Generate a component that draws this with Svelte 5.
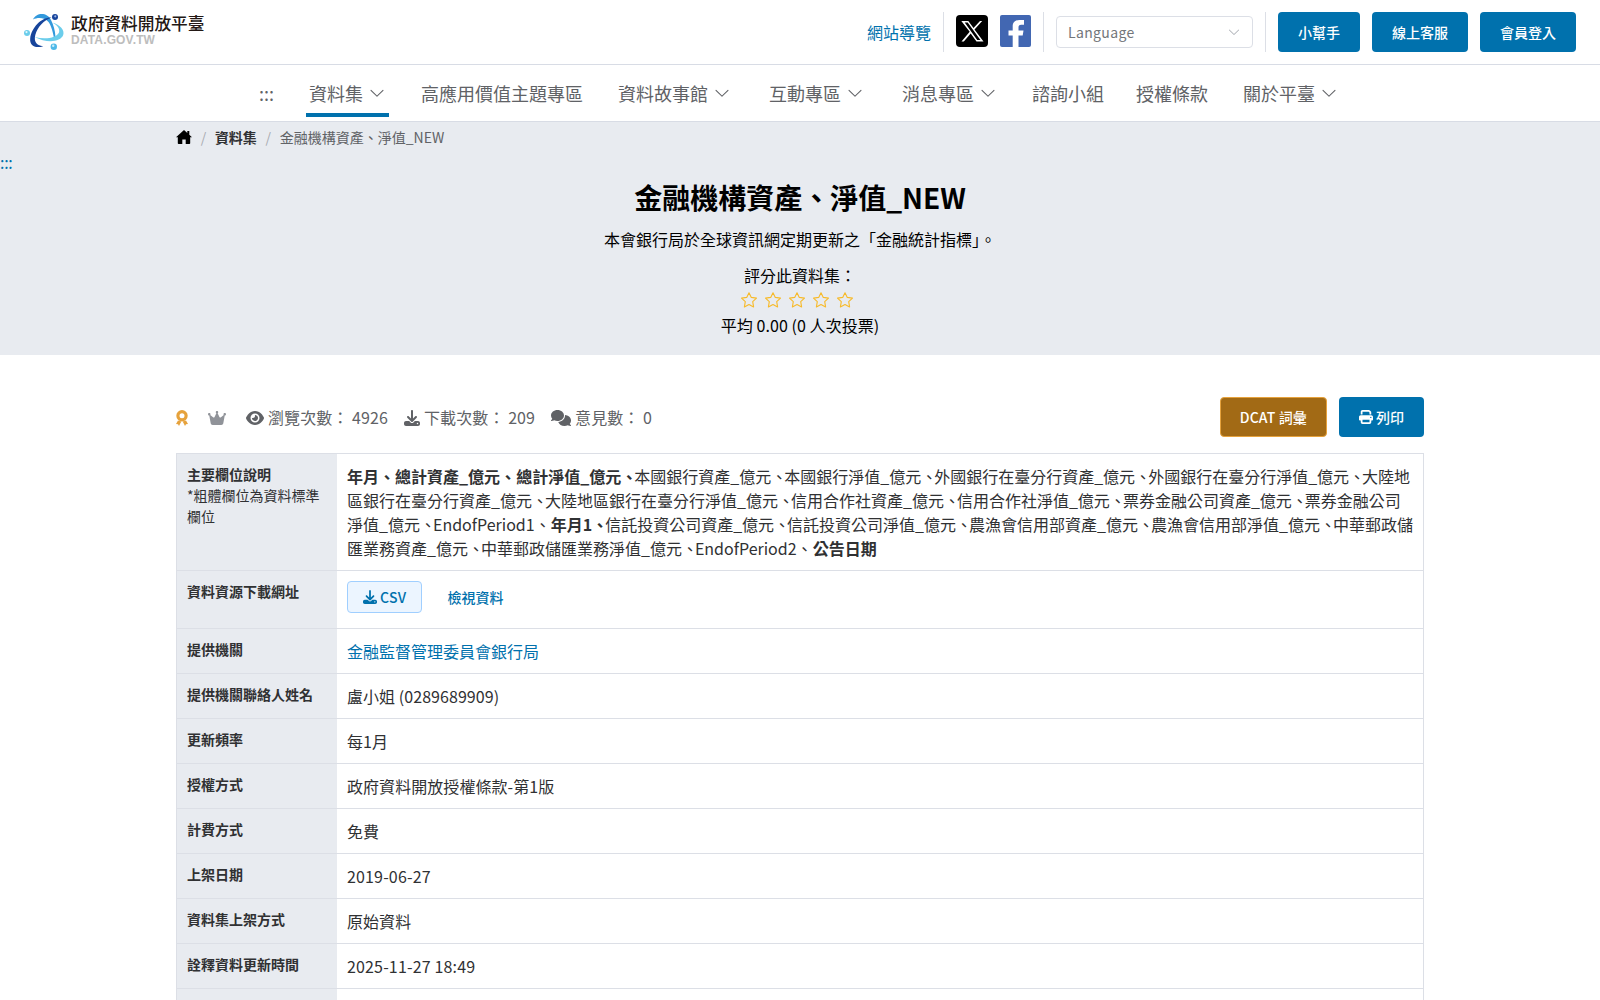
<script>
  const fields = [
    ['年月', 1], ['總計資產_億元', 1], ['總計淨值_億元', 1, 1], ['本國銀行資產_億元', 0, 1], ['本國銀行淨值_億元', 0, 1],
    ['外國銀行在臺分行資產_億元', 0, 1], ['外國銀行在臺分行淨值_億元', 0, 1], ['大陸地區銀行在臺分行資產_億元', 0, 1],
    ['大陸地區銀行在臺分行淨值_億元', 0, 1], ['信用合作社資產_億元', 0, 1], ['信用合作社淨值_億元', 0, 1],
    ['票券金融公司資產_億元', 0, 1], ['票券金融公司淨值_億元', 0, 1], ['EndofPeriod1', 0], ['年月1', 1, 1],
    ['信託投資公司資產_億元', 0, 1], ['信託投資公司淨值_億元', 0, 1], ['農漁會信用部資產_億元', 0, 1],
    ['農漁會信用部淨值_億元', 0, 1], ['中華郵政儲匯業務資產_億元', 0, 1], ['中華郵政儲匯業務淨值_億元', 0, 1],
    ['EndofPeriod2', 0], ['公告日期', 1]
  ];
  const nav = [
    { t: '資料集', d: true, on: true, w: 112 }, { t: '高應用價值主題專區', w: 197 }, { t: '資料故事館', d: true, w: 151 },
    { t: '互動專區', d: true, w: 133 }, { t: '消息專區', d: true, w: 130 }, { t: '諮詢小組', w: 104 },
    { t: '授權條款', w: 107 }, { t: '關於平臺', d: true, w: 133 }
  ];
  const rows = [
    ['提供機關聯絡人姓名', '盧小姐 (0289689909)'], ['更新頻率', '每1月'], ['授權方式', '政府資料開放授權條款-第1版'],
    ['計費方式', '免費'], ['上架日期', '2019-06-27', 1], ['資料集上架方式', '原始資料'],
    ['詮釋資料更新時間', '2025-11-27 18:49', 1], ['', '']
  ];
</script>

{#snippet chevron(size)}
  <svg class="chev" width={size} height={size} viewBox="0 0 1024 1024" fill="currentColor"><path d="M831.872 340.864 512 652.672 192.128 340.864a30.592 30.592 0 0 0-42.752 0 29.12 29.12 0 0 0 0 41.6L489.664 714.24a32 32 0 0 0 44.672 0l340.288-331.712a29.12 29.12 0 0 0 0-41.728 30.592 30.592 0 0 0-42.752 0z" /></svg>
{/snippet}
{#snippet download(size)}
  <svg width={size} height={size} viewBox="0 0 512 512" fill="currentColor"><path d="M288 32c0-17.7-14.3-32-32-32s-32 14.3-32 32V274.700l-73.400-73.400c-12.500-12.500-32.800-12.500-45.300 0s-12.500 32.800 0 45.300l128 128c12.500 12.500 32.800 12.500 45.300 0l128-128c12.500-12.500 12.500-32.800 0-45.300s-32.800-12.500-45.300 0L288 274.700V32zM64 352c-35.300 0-64 28.700-64 64v32c0 35.300 28.700 64 64 64H448c35.300 0 64-28.700 64-64V416c0-35.300-28.700-64-64-64H346.500l-45.300 45.300c-25 25-65.500 25-90.500 0L165.500 352H64zm368 56a24 24 0 1 1 0 48 24 24 0 1 1 0-48z" /></svg>
{/snippet}

<div class="page">
  <header class="top">
    <a class="brand" href="#top" aria-label="DATA.GOV.TW">
      <svg width="42" height="40" viewBox="0 0 42 40">
        <path d="M9 7.500C12 .5 23-.5 27 8c2.500 5 4 10 4.500 17l-1.600.5C28.500 18 26.500 12 24 9.500 20 5 13 5.500 9 7.500z" fill="#3299dc" />
        <path d="M27.500 5.500C20 8 13.500 15 11.300 23c-1.500 6 .5 10.500 8 11.200C10.500 37 5.500 33 6.200 26.500 7.500 15.500 17.500 5 27.500 5.500z" fill="#17449b" />
        <path d="M28.500 10.500c7.500 2.500 12.500 7.500 10.700 12.500-2.500 7-16.200 8.500-28.700 2 11 2.700 22 1 24.500-4.500 1.200-3.500-1.500-7-6.500-10z" fill="#6bcdeb" />
        <circle cx="31" cy="4.900" r="3" fill="#17449b" /><circle cx="31.300" cy="4.300" r="1.100" fill="#9eb6e5" />
        <circle cx="3" cy="20.900" r="3" fill="#6bcdeb" /><circle cx="2.500" cy="20.100" r="1.100" fill="#e4f8fd" />
        <circle cx="29.800" cy="34.700" r="3.200" fill="#4eb8e8" /><circle cx="29.200" cy="33.800" r="1.200" fill="#c9edfa" />
      </svg>
      <span class="names"><b>政府資料開放平臺</b><small>DATA.GOV.TW</small></span>
    </a>
    <div class="tools">
      <a class="map" href="#map">網站導覽</a>
      <i class="sep"></i>
      <svg class="social" width="32" height="32" viewBox="0 0 32 32"><rect width="32" height="32" rx="4" /><path d="M5.300 6h7l5.200 7.100L24 6h2.200l-7.700 8.500L27.500 26.500h-7l-5.800-8L7.800 26.500H5.500l8.200-9.700zM8.700 7.600 21.200 24.900h3.200L11.700 7.600z" fill="#fff" /></svg>
      <svg class="social" width="31" height="32" viewBox="0 0 31 32"><rect width="31" height="32" rx="2" fill="#4267b2" /><path d="M12.700 32V20.500H8.500V15.500h4.200V11.500c0-4.500 2.800-6.500 6.800-6.500H24v4.800h-2.800c-2 0-2.700.8-2.700 2.600v3.100h5l-.8 5h-4.200V32z" fill="#fff" /></svg>
      <i class="sep"></i>
      <div class="select"><span>Language</span>{@render chevron(14)}</div>
      <i class="sep"></i>
      <button>小幫手</button><button>線上客服</button><button>會員登入</button>
    </div>
  </header>

  <nav>
    <span class="dots">:::</span>
    <ul>
      {#each nav as n}
        <li style:width="{n.w}px"><a class:on={n.on} href="#nav">{n.t}{#if n.d}{@render chevron(18)}{/if}</a></li>
      {/each}
    </ul>
  </nav>

  <section class="hero">
    <div class="crumbs">
      <svg width="16" height="16" viewBox="0 0 16 16"><path d="M8 1 0 8.300h1.800V14.200q0 .8.800.8H6.300V10.500h3.400V15h3.700q.8 0 .8-.8V8.300H16L13.300 5.800V2h-2v2z" /></svg>
      <i>/</i><b>資料集</b><i>/</i><span>金融機構資產、淨值_NEW</span>
    </div>
    <div class="anchor">:::</div>
    <h1>金融機構資產、淨值_NEW</h1>
    <p>本會銀行局於全球資訊網定期更新之「金融統計指標」。</p>
    <div class="rate">評分此資料集：</div>
    <div class="stars">
      {#each Array(5) as _}
        <svg width="18" height="18" viewBox="0 0 18 18" fill="none" stroke="#f7ba2a" stroke-width="1.100" stroke-linejoin="round"><path d="m9 1.700 2.300 4.700 5.200.7-3.800 3.600.9 5.200L9 13.600l-4.600 2.300.9-5.200L1.500 7.100l5.200-.7z" /></svg>
      {/each}
    </div>
    <div class="avg">平均 0.00 (0 人次投票)</div>
  </section>

  <main>
    <div class="meta">
      <svg class="medal" width="12" height="16" viewBox="0 0 12 16"><circle cx="6" cy="5.700" r="4.100" fill="none" stroke="#e6a23c" stroke-width="3.200" /><path d="M2 10.500 0 14l2 .2L3 16l2.300-4.500zM10 10.500l2 3.500-2 .2L9 16l-2.300-4.500z" fill="#e6a23c" /></svg>
      <svg class="crown" width="18" height="16" viewBox="0 0 576 512" fill="#909399"><path d="M309 106c11.400-7 19-19.700 19-34 0-22.100-17.900-40-40-40s-40 17.900-40 40c0 14.400 7.600 27 19 34L209.700 220.600c-9.100 18.200-32.700 23.400-48.600 10.700L72 160c5-6.700 8-15 8-24 0-22.100-17.900-40-40-40S0 113.900 0 136s17.900 40 40 40c.2 0 .5 0 .7 0L86.400 427.400c5.500 30.400 32 52.600 63 52.600H426.600c30.900 0 57.400-22.100 63-52.600L535.300 176c.2 0 .5 0 .7 0 22.100 0 40-17.900 40-40s-17.900-40-40-40-40 17.900-40 40c0 9 3 17.300 8 24l-89.100 71.300c-15.900 12.700-39.500 7.500-48.600-10.700L309 106z" /></svg>
      <span class="stat"><svg width="18" height="16" viewBox="0 0 576 512" fill="currentColor"><path d="M288 32c-80.800 0-145.500 36.800-192.600 80.600C48.600 156 17.300 208 2.500 243.700c-3.300 7.900-3.300 16.700 0 24.600C17.300 304 48.600 356 95.400 399.400 142.500 443.200 207.200 480 288 480s145.500-36.800 192.600-80.600c46.800-43.500 78.100-95.400 93-131.100 3.300-7.900 3.300-16.700 0-24.600-14.900-35.700-46.200-87.700-93-131.100C433.500 68.800 368.800 32 288 32zM144 256a144 144 0 1 1 288 0 144 144 0 1 1-288 0zm144-64c0 35.300-28.700 64-64 64-7.100 0-13.900-1.200-20.300-3.300-5.500-1.800-11.900 1.600-11.700 7.400.3 6.900 1.300 13.800 3.200 20.700 13.700 51.200 66.400 81.600 117.600 67.900s81.600-66.400 67.900-117.600c-11.100-41.500-47.800-69.400-88.600-71.100-5.800-.2-9.200 6.100-7.400 11.700 2.100 6.400 3.300 13.200 3.300 20.300z" /></svg>瀏覽次數： 4926</span>
      <span class="stat">{@render download(16)}下載次數： 209</span>
      <span class="stat"><svg width="20" height="16" viewBox="0 0 640 512" fill="currentColor"><path d="M208 352c114.900 0 208-78.800 208-176S322.900 0 208 0 0 78.800 0 176c0 38.600 14.700 74.300 39.600 103.400-3.500 9.400-8.700 17.700-14.200 24.700-4.800 6.200-9.700 11-13.300 14.300-1.800 1.600-3.300 2.900-4.300 3.700C.9 327.300-1.400 336.400.8 343.400S9.200 352 16 352c21.800 0 43.800-5.600 62.100-12.500 9.200-3.500 17.800-7.400 25.300-11.400C134.100 343.300 169.800 352 208 352zM448 176c0 112.300-99.100 196.900-216.500 207C255.800 457.400 336.400 512 432 512c38.200 0 73.900-8.700 104.700-23.900 7.500 4 16 7.900 25.200 11.400 18.300 6.900 40.300 12.500 62.100 12.500 6.800 0 12.900-4.500 15-11.100 2.100-6.600-.2-13.800-5.800-17.900-1-.8-2.500-2-4.200-3.700-3.600-3.300-8.500-8.100-13.300-14.300-5.500-7-10.700-15.400-14.200-24.700 24.900-29 39.600-64.700 39.600-103.400 0-92.800-84.900-168.900-192.600-175.500.4 5.100.6 10.300.6 15.500z" /></svg>意見數： 0</span>
      <div class="acts">
        <button class="dcat">DCAT 詞彙</button>
        <button class="print"><svg width="14" height="14" viewBox="0 0 512 512" fill="currentColor"><path d="M128 0C92.700 0 64 28.700 64 64v96h64V64h226.700L384 93.300V160h64V93.300c0-17-6.700-33.300-18.700-45.300L400 18.700C388 6.700 371.700 0 354.700 0H128zM384 352v96H128V352H384zm64 32h32c17.700 0 32-14.300 32-32V256c0-35.300-28.700-64-64-64H64c-35.300 0-64 28.700-64 64v96c0 17.700 14.300 32 32 32h32v64c0 35.300 28.700 64 64 64h256c35.300 0 64-28.700 64-64v-64zM432 248a24 24 0 1 1 0 48 24 24 0 1 1 0-48z" /></svg>列印</button>
      </div>
    </div>

    <div class="table">
      <div class="row first">
        <div class="th"><b>主要欄位說明</b><br />*粗體欄位為資料標準欄位</div>
        <div class="td">{#each fields as f, i}<span class:strong={f[1]}>{f[0]}</span>{#if i < fields.length - 1}<span class:strong={f[1]} class:tight={f[2]}>、</span>{/if}{/each}</div>
      </div>
      <div class="row res">
        <div class="th"><b>資料資源下載網址</b></div>
        <div class="td"><button class="csv">{@render download(14)}CSV</button><a class="view" href="#view">檢視資料</a></div>
      </div>
      <div class="row"><div class="th"><b>提供機關</b></div><div class="td"><a href="#org">金融監督管理委員會銀行局</a></div></div>
      {#each rows as r}
        <div class="row"><div class="th"><b>{r[0]}</b></div><div class="td value" class:date={r[2]}>{r[1]}</div></div>
      {/each}
    </div>
  </main>
</div>

<style>
  :global(body) { margin: 0; overflow: hidden; }
  .page { height: 1000px; overflow: hidden; background: #fff; color: #303133; font: 16px/24px "Noto Sans CJK TC", sans-serif; }
  .page * { box-sizing: border-box; }
  a { color: #0071ad; text-decoration: none; }
  svg { flex: none; }
  .top { height: 65px; border-bottom: 1px solid #d8dce5; display: flex; justify-content: space-between; align-items: flex-start; padding: 12px 24px 0; }
  .brand { display: flex; gap: 5px; }
  .names { display: flex; flex-direction: column; }
  .names b { font-size: 16.700px; line-height: 22px; font-weight: 500; color: #231815; }
  .names small { font: bold 12px/12px "Liberation Sans", sans-serif; color: #bdbdbd; letter-spacing: .15px; }
  .tools { display: flex; align-items: center; gap: 12px; height: 40px; }
  .sep { width: 1px; height: 40px; background: #dcdfe6; }
  .select { width: 197px; height: 32px; border: 1px solid #dcdfe6; border-radius: 4px; display: flex; align-items: center; justify-content: space-between; padding: 0 11px; font-size: 14px; color: #73767a; letter-spacing: .35px; }
  .select .chev { color: #a8abb2; }
  .social { margin-bottom: 2px; }
  button { font: 500 14px/20px "Noto Sans CJK TC", sans-serif; color: #fff; background: #0071ad; border: 0; border-radius: 4px; height: 40px; padding: 0 20px; display: inline-flex; align-items: center; gap: 3px; }
  nav { height: 57px; border-bottom: 1px solid #d8dce5; display: flex; padding-left: 259px; color: #606266; font-size: 18px; line-height: 56px; }
  .dots { width: 47px; }
  ul { list-style: none; display: flex; padding: 0; margin: 0; }
  li { display: flex; align-items: flex-start; }
  nav a { color: #606266; display: flex; align-items: center; gap: 5px; height: 52px; line-height: 44px; padding: 8px 3px 0; border-bottom: 4px solid transparent; }
  nav a.on { border-color: #0071ad; }
  .hero { height: 233px; background: #e8ebf0; color: #000; text-align: center; }
  .crumbs { height: 30px; padding-left: 176px; display: flex; align-items: center; font-size: 14px; color: #606266; }
  .crumbs b { color: #303133; }
  .crumbs i { color: #a8abb2; margin: 0 8.700px; font-style: normal; }
  .anchor { text-align: left; color: #0071ad; height: 23px; line-height: 20px; letter-spacing: -.3px; }
  h1 { margin: 0; font-size: 28px; line-height: 42px; padding-top: 1px; }
  p { margin: 9px 0 0; line-height: 24px; }
  .rate { margin-top: 12px; }
  .stars { height: 26px; display: flex; justify-content: center; align-items: center; gap: 6px; padding-right: 6px; }
  .avg { letter-spacing: .07px; }
  main { width: 1248px; margin: 0 auto; }
  .meta { margin-top: 42px; height: 40px; display: flex; align-items: center; color: #606266; }
  .meta > svg, .stat svg { margin-top: 2px; }
  .meta > .crown { margin: 2px 20px 0 20px; }
  .stat { display: flex; align-items: center; gap: 4px; margin-right: 16px; white-space: pre; letter-spacing: .09px; }
  .acts { margin-left: auto; display: flex; gap: 12px; }
  .dcat { background: #a26a15; border: 1px solid #e6a23c; padding: 0 19px; letter-spacing: .14px; }
  .table { margin-top: 16px; border: 1px solid #dcdfe6; border-bottom: 0; }
  .row { display: flex; height: 45px; border-bottom: 1px solid #dcdfe6; }
  .row.first { height: 117px; }
  .row.res { height: 58px; }
  .th { width: 160px; background: #e8ebf0; padding: 10px; font-size: 14px; line-height: 21px; }
  .td { flex: 1; padding: 10px; }
  .value { letter-spacing: .06px; }
  .date { letter-spacing: .16px; }
  .row.first .td { padding: 10px 8px 10px 10px; }
  .strong { font-weight: 700; }
  .tight { letter-spacing: -3px; }
  .row.res .td { display: flex; align-items: center; align-self: flex-start; padding-top: 10px; }
  .csv { height: 32px; color: #0071ad; background: #ecf5ff; border: 1px solid #a0cfff; padding: 0 15px; letter-spacing: .3px; }
  .view { font-size: 14px; font-weight: 500; margin-left: 25px; }
</style>
